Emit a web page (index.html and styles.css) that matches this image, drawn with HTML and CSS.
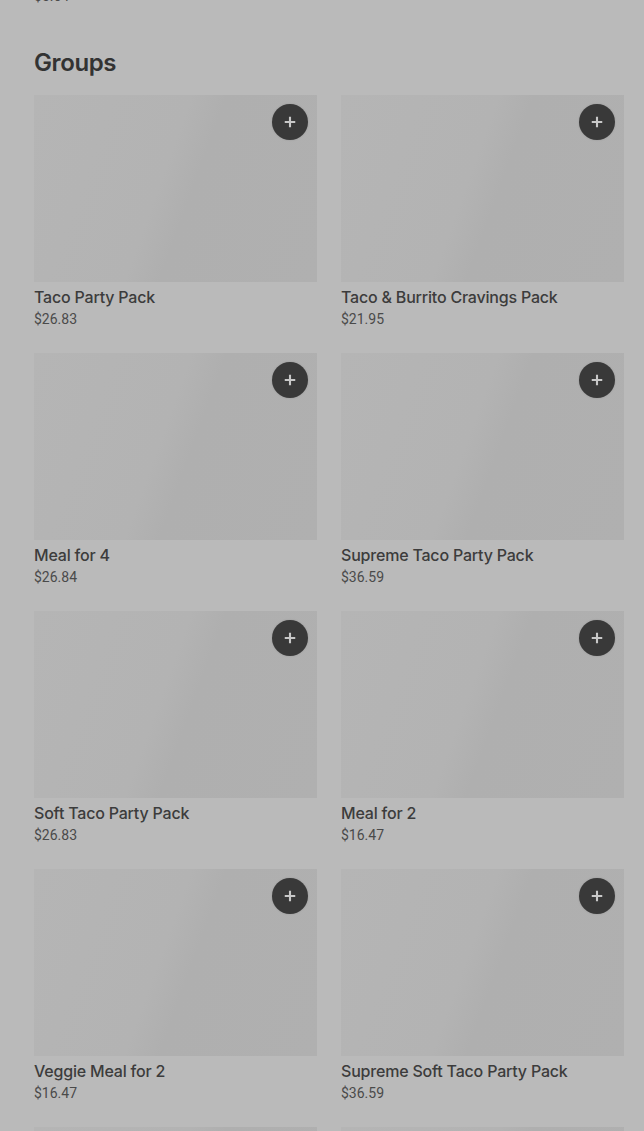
FILE: index.html
```html
<!DOCTYPE html>
<html lang="en">
<head>
<meta charset="utf-8">
<title>Groups</title>
<link rel="stylesheet" href="styles.css">
</head>
<body>
<main class="page">
  <div class="prev-price">$5.64</div>
  <section class="section">
    <h2 class="section-title">Groups</h2>
    <div class="grid">
      <article class="item"><div class="thumb"><button class="add" aria-label="Add"><svg viewBox="0 0 16 16" width="14" height="14"><path d="M8 2v12M2 8h12" stroke="currentColor" stroke-width="2.4"/></svg></button></div><div class="name">Taco Party Pack</div><div class="price">$26.83</div></article>
      <article class="item"><div class="thumb"><button class="add" aria-label="Add"><svg viewBox="0 0 16 16" width="14" height="14"><path d="M8 2v12M2 8h12" stroke="currentColor" stroke-width="2.4"/></svg></button></div><div class="name">Taco &amp; Burrito Cravings Pack</div><div class="price">$21.95</div></article>
      <article class="item"><div class="thumb"><button class="add" aria-label="Add"><svg viewBox="0 0 16 16" width="14" height="14"><path d="M8 2v12M2 8h12" stroke="currentColor" stroke-width="2.4"/></svg></button></div><div class="name">Meal for 4</div><div class="price">$26.84</div></article>
      <article class="item"><div class="thumb"><button class="add" aria-label="Add"><svg viewBox="0 0 16 16" width="14" height="14"><path d="M8 2v12M2 8h12" stroke="currentColor" stroke-width="2.4"/></svg></button></div><div class="name">Supreme Taco Party Pack</div><div class="price">$36.59</div></article>
      <article class="item"><div class="thumb"><button class="add" aria-label="Add"><svg viewBox="0 0 16 16" width="14" height="14"><path d="M8 2v12M2 8h12" stroke="currentColor" stroke-width="2.4"/></svg></button></div><div class="name">Soft Taco Party Pack</div><div class="price">$26.83</div></article>
      <article class="item"><div class="thumb"><button class="add" aria-label="Add"><svg viewBox="0 0 16 16" width="14" height="14"><path d="M8 2v12M2 8h12" stroke="currentColor" stroke-width="2.4"/></svg></button></div><div class="name">Meal for 2</div><div class="price">$16.47</div></article>
      <article class="item"><div class="thumb"><button class="add" aria-label="Add"><svg viewBox="0 0 16 16" width="14" height="14"><path d="M8 2v12M2 8h12" stroke="currentColor" stroke-width="2.4"/></svg></button></div><div class="name">Veggie Meal for 2</div><div class="price">$16.47</div></article>
      <article class="item"><div class="thumb"><button class="add" aria-label="Add"><svg viewBox="0 0 16 16" width="14" height="14"><path d="M8 2v12M2 8h12" stroke="currentColor" stroke-width="2.4"/></svg></button></div><div class="name">Supreme Soft Taco Party Pack</div><div class="price">$36.59</div></article>
      <article class="item"><div class="thumb"></div></article>
      <article class="item"><div class="thumb"></div></article>
    </div>
  </section>
</main>
</body>
</html>
```
FILE: styles.css
```css
html, body {
  margin: 0;
  padding: 0;
  background: #bababa;
  overflow: hidden;
}
.page {
  padding: 0 20px 0 34px;
  font-family: Roboto, "Liberation Sans", sans-serif;
  color: #3a3a3a;
  height: 1131px;
  overflow: hidden;
}
.prev-price {
  font-size: 14px;
  line-height: 20px;
  margin-top: -14px;
  color: #4a4a4a;
}
.section-title {
  margin: 40px 0 0;
  font-family: Inter, Roboto, sans-serif;
  font-size: 24px;
  font-weight: 600;
  letter-spacing: -0.4px;
  line-height: 34px;
  color: #333;
}
.grid {
  margin-top: 15px;
  display: grid;
  grid-template-columns: 283px 283px;
  column-gap: 24px;
  row-gap: 24px;
}
.thumb {
  position: relative;
  height: 187px;
  background: linear-gradient(110deg, #b5b5b5 0%, #b3b3b3 45%, #afafaf 55%, #b0b0b0 100%);
}
.add {
  position: absolute;
  top: 9px;
  right: 9px;
  width: 36px;
  height: 36px;
  border-radius: 50%;
  border: 0;
  padding: 0;
  background: #393939;
  color: #c8c8c8;
  display: flex;
  align-items: center;
  justify-content: center;
  box-shadow: 0 0 2px rgba(0,0,0,0.15);
}
.name {
  margin-top: 3px;
  font-family: Inter, Roboto, sans-serif;
  font-size: 16px;
  font-weight: 500;
  letter-spacing: -0.2px;
  line-height: 24px;
  color: #3c3c3c;
}
.price {
  font-size: 14px;
  line-height: 20px;
  color: #4a4a4a;
}
```
